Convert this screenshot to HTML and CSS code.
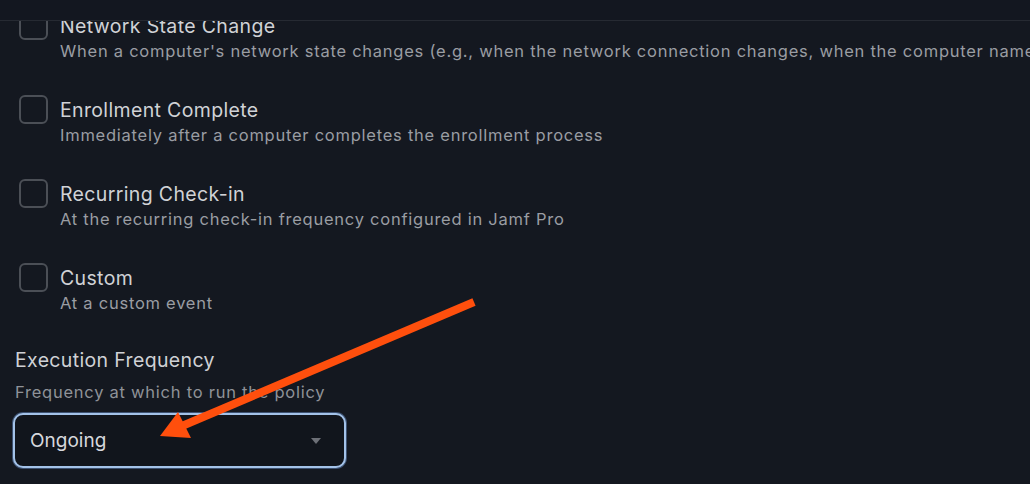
FILE: index.html
```html
<!DOCTYPE html>
<html lang="en">
<head>
<meta charset="utf-8">
<title>Policy Triggers</title>
<link rel="stylesheet" href="styles.css">
</head>
<body>
<div class="page">
  <header class="topbar"></header>
  <main class="viewport">
    <div class="content">
      <ul class="triggers">
        <li class="trigger">
          <span class="checkbox"></span>
          <div class="trigger-text">
            <div class="trigger-title">Network State Change</div>
            <div class="trigger-desc">When a computer's network state changes (e.g., when the network connection changes, when the computer name changes)</div>
          </div>
        </li>
        <li class="trigger">
          <span class="checkbox"></span>
          <div class="trigger-text">
            <div class="trigger-title">Enrollment Complete</div>
            <div class="trigger-desc">Immediately after a computer completes the enrollment process</div>
          </div>
        </li>
        <li class="trigger">
          <span class="checkbox"></span>
          <div class="trigger-text">
            <div class="trigger-title">Recurring Check-in</div>
            <div class="trigger-desc">At the recurring check-in frequency configured in Jamf Pro</div>
          </div>
        </li>
        <li class="trigger">
          <span class="checkbox"></span>
          <div class="trigger-text">
            <div class="trigger-title">Custom</div>
            <div class="trigger-desc">At a custom event</div>
          </div>
        </li>
      </ul>
      <section class="field">
        <div class="field-label">Execution Frequency</div>
        <div class="field-desc">Frequency at which to run the policy</div>
        <div class="select">
          <span class="select-value">Ongoing</span>
          <svg class="caret" width="10" height="6" viewBox="0 0 10 6"><path d="M0 0 L10 0 L5 6 Z" fill="#6d7077"/></svg>
        </div>
      </section>
    </div>
  </main>
  <svg class="annotation" width="1030" height="484" viewBox="0 0 1030 484">
    <line x1="474" y1="302" x2="182" y2="426" stroke="#ff4f0d" stroke-width="8"/>
    <polygon points="160,436 178,412 191,438" fill="#ff4f0d"/>
  </svg>
</div>
</body>
</html>
```
FILE: styles.css
```css
* { box-sizing: border-box; }
html, body {
  margin: 0;
  padding: 0;
  background: #141820;
}
body {
  font-family: Inter, "Noto Sans", "Liberation Sans", sans-serif;
  color: #cfd1d5;
}
.page {
  position: relative;
  width: 1030px;
  height: 484px;
  overflow: hidden;
  display: flex;
  flex-direction: column;
}
.topbar {
  height: 21px;
  flex: 0 0 21px;
  background: #131720;
  border-bottom: 1px solid #262a32;
  position: relative;
  z-index: 2;
}
.viewport {
  flex: 1;
  overflow: hidden;
}
.content {
  margin-top: -8px;
}
.triggers {
  list-style: none;
  margin: 0;
  padding: 0 0 0 19px;
  display: flex;
  flex-direction: column;
  gap: 34px;
}
.trigger {
  display: flex;
  align-items: flex-start;
  gap: 12px;
}
.checkbox {
  flex: 0 0 29px;
  width: 29px;
  height: 29px;
  margin-top: -2px;
  border: 2px solid #4b4f56;
  border-radius: 6px;
}
.trigger-text {
  white-space: nowrap;
}
.trigger-title {
  font-size: 19.5px;
  line-height: 26px;
  letter-spacing: 0.35px;
  color: #d0d2d6;
}
.trigger-desc {
  font-size: 16.5px;
  line-height: 24px;
  color: #9a9da3;
  letter-spacing: 0.75px;
}
.field {
  padding: 32px 0 0 15px;
  display: flex;
  flex-direction: column;
}
.field-label {
  font-size: 19.5px;
  line-height: 26px;
  letter-spacing: 0.35px;
  color: #cfd1d5;
}
.field-desc {
  margin-top: 7px;
  font-size: 16.5px;
  line-height: 24px;
  color: #8f9298;
  letter-spacing: 0.75px;
}
.select {
  margin: 9px 0 0 -2px;
  width: 333px;
  height: 55px;
  border: 2px solid #a3c2e8;
  border-radius: 10px;
  box-shadow: 0 0 0 1px rgba(110, 150, 210, 0.45);
  background: #11151c;
  display: flex;
  align-items: center;
  justify-content: space-between;
  padding: 0 23px 0 15px;
}
.select-value {
  font-size: 19px;
  color: #d6d8dc;
}
.caret {
  display: block;
}
.annotation {
  position: absolute;
  left: 0;
  top: 0;
  pointer-events: none;
  z-index: 3;
}
```
